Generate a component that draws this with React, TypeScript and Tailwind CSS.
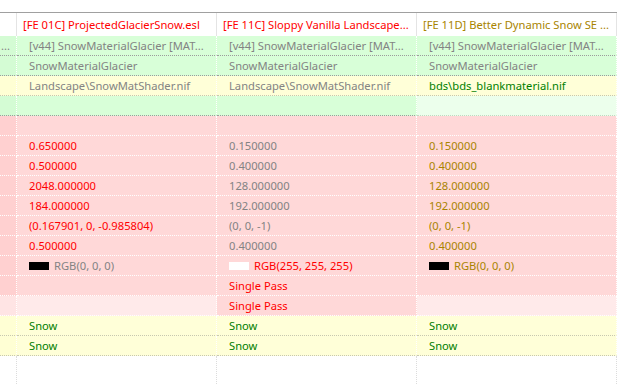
type Tone = "green" | "yellow" | "red" | "pink" | "mint";
type Ink = "gray" | "red" | "olive" | "green";

type Cell = { text?: string; ink?: Ink; bg?: Tone; swatch?: "black" | "white" };
type Row = { bg: Tone; lead?: string; cells: Cell[] };

const bgClass: Record<Tone, string> = {
  green: "bg-[#d8ffd8]",
  yellow: "bg-[#ffffd8]",
  red: "bg-[#ffd8d8]",
  pink: "bg-[#ffeaea]",
  mint: "bg-[#ecffec]",
};

const leadBg: Record<Tone, string> = {
  green: "bg-[#d4fcd4]",
  yellow: "bg-[#ffffd4]",
  red: "bg-[#ffd0d0]",
  pink: "bg-[#ffe4e4]",
  mint: "bg-[#e8fce8]",
};

const inkClass: Record<Ink, string> = {
  gray: "text-[#838383]",
  red: "text-[#ff0000]",
  olive: "text-[#a88400]",
  green: "text-[#008000]",
};

const lineClass: Record<Tone, string> = {
  green: "border-[#9c9c9c]",
  yellow: "border-[#c8c8b0]",
  red: "border-white",
  pink: "border-white",
  mint: "border-[#c0d8c0]",
};

const headers: { text: string; ink: Ink }[] = [
  { text: "[FE 01C] ProjectedGlacierSnow.esl", ink: "red" },
  { text: "[FE 11C] Sloppy Vanilla Landscape...", ink: "red" },
  { text: "[FE 11D] Better Dynamic Snow SE ...", ink: "olive" },
];

const g = (text: string): Cell => ({ text, ink: "gray" });
const r = (text: string): Cell => ({ text, ink: "red" });
const o = (text: string): Cell => ({ text, ink: "olive" });
const snow: Cell = { text: "Snow", ink: "green" };

const rows: Row[] = [
  {
    bg: "green",
    lead: "...",
    cells: [
      g("[v44] SnowMaterialGlacier [MAT..."),
      g("[v44] SnowMaterialGlacier [MAT..."),
      g("[v44] SnowMaterialGlacier [MAT..."),
    ],
  },
  { bg: "green", cells: [g("SnowMaterialGlacier"), g("SnowMaterialGlacier"), g("SnowMaterialGlacier")] },
  {
    bg: "yellow",
    cells: [
      g("Landscape\\SnowMatShader.nif"),
      g("Landscape\\SnowMatShader.nif"),
      { text: "bds\\bds_blankmaterial.nif", ink: "green" },
    ],
  },
  { bg: "green", cells: [{}, {}, { bg: "mint" }] },
  { bg: "red", cells: [{}, {}, {}] },
  { bg: "red", cells: [r("0.650000"), g("0.150000"), o("0.150000")] },
  { bg: "red", cells: [r("0.500000"), g("0.400000"), o("0.400000")] },
  { bg: "red", cells: [r("2048.000000"), g("128.000000"), o("128.000000")] },
  { bg: "red", cells: [r("184.000000"), g("192.000000"), o("192.000000")] },
  { bg: "red", cells: [r("(0.167901, 0, -0.985804)"), g("(0, 0, -1)"), o("(0, 0, -1)")] },
  { bg: "red", cells: [r("0.500000"), g("0.400000"), o("0.400000")] },
  {
    bg: "red",
    cells: [
      { text: "RGB(0, 0, 0)", ink: "gray", swatch: "black" },
      { text: "RGB(255, 255, 255)", ink: "red", swatch: "white" },
      { text: "RGB(0, 0, 0)", ink: "olive", swatch: "black" },
    ],
  },
  { bg: "red", cells: [{}, r("Single Pass"), {}] },
  { bg: "pink", cells: [{}, { text: "Single Pass", ink: "red", bg: "red" }, {}] },
  { bg: "yellow", cells: [snow, snow, snow] },
  { bg: "yellow", cells: [snow, snow, snow] },
];

function Lead({ row }: { row: Row }) {
  return (
    <div
      className={`flex h-5 items-center overflow-hidden whitespace-nowrap border-r border-b border-dotted border-r-white pl-[1px] text-[#838383] ${leadBg[row.bg]} ${lineClass[row.bg]}`}
    >
      {row.lead}
    </div>
  );
}

function DataCell({ cell, rowBg }: { cell: Cell; rowBg: Tone }) {
  const tone = cell.bg ?? rowBg;
  return (
    <div
      className={`flex h-5 items-center overflow-hidden whitespace-nowrap border-r border-b border-dotted border-r-white pl-3 ${bgClass[tone]} ${lineClass[tone]} ${cell.ink ? inkClass[cell.ink] : ""}`}
    >
      {cell.swatch && (
        <span
          className={`mr-[5px] inline-block h-[8px] w-[20px] ${cell.swatch === "black" ? "bg-black" : "bg-white"}`}
        />
      )}
      {cell.text}
    </div>
  );
}

export default function App() {
  return (
    <div
      className="h-[385px] w-[621px] overflow-hidden bg-white text-[11.2px] leading-none"
      style={{ fontFamily: '"Noto Sans", "Open Sans", sans-serif' }}
    >
      <div className="box-content h-[12px] w-[617px] border-b border-[#a0a0a0]" />
      <div className="grid w-[617px] grid-cols-[17px_200px_200px_200px]">
        <div className="h-[23px] border-r border-[#e4e4e4] bg-white" />
        {headers.map((h) => (
          <div
            key={h.text}
            className={`flex h-[23px] items-center overflow-hidden whitespace-nowrap border-r border-[#e4e4e4] bg-white pl-[6px] ${inkClass[h.ink]}`}
          >
            {h.text}
          </div>
        ))}
        {rows.flatMap((row, i) => [
          <Lead key={`lead-${i}`} row={row} />,
          ...row.cells.map((c, j) => <DataCell key={`${i}-${j}`} cell={c} rowBg={row.bg} />),
        ])}
        {/* empty space below the rows still shows the column grid lines */}
        {[0, 1, 2, 3].map((k) => (
          <div key={`fill-${k}`} className="h-[40px] border-r border-dotted border-[#dcdcdc]" />
        ))}
      </div>
    </div>
  );
}
